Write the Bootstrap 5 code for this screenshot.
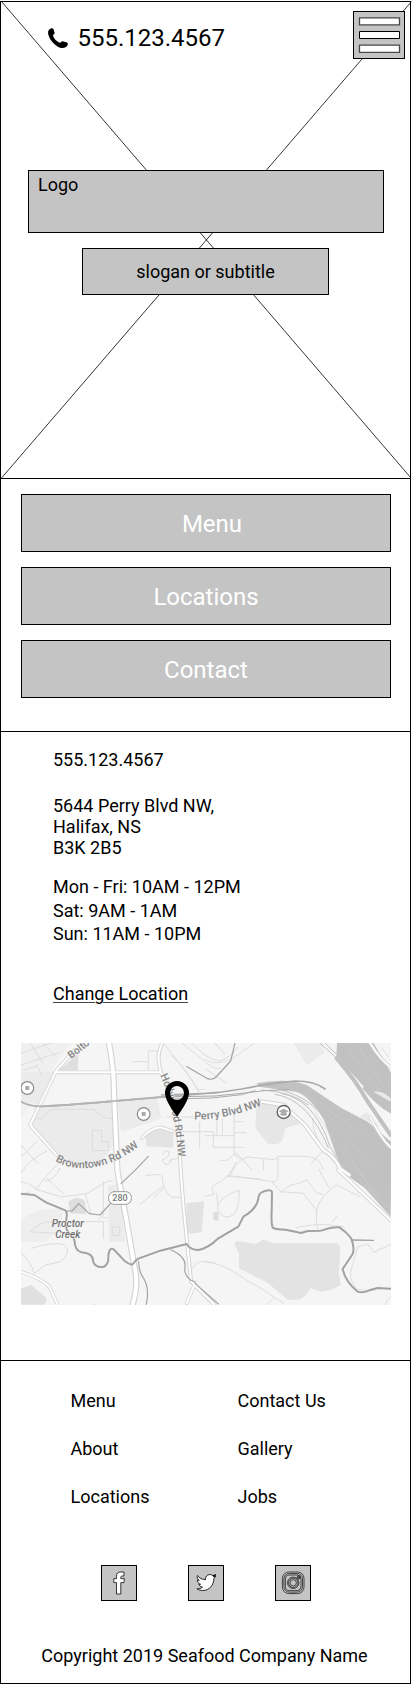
<!DOCTYPE html>
<html lang="en">
<head>
<meta charset="utf-8">
<meta name="viewport" content="width=device-width, initial-scale=1">
<title>Seafood Company Name</title>
<link href="https://cdn.jsdelivr.net/npm/bootstrap@5.3.0/dist/css/bootstrap.min.css" rel="stylesheet">
<style>
  body { font-family: Roboto, "Liberation Sans", sans-serif; font-size: 18px; line-height: 21px; color: #000; background: #fff; overflow-x: hidden; }
  a { color: #000; text-decoration: none; }
  .page-frame { width: 411px; height: 1683px; margin-top: 1px; border: 1px solid #000; }
  .hero { height: 477px; border-bottom: 1px solid #000; padding: 9px 5px 0 27px; }
  .hero-cross { left: 0; top: 0; z-index: 0; overflow: visible; pointer-events: none; }
  .hero-top { height: 159px; padding-left: 20px; z-index: 1; }
  .phone-line { font-size: 24px; line-height: 28px; margin-top: 13px; gap: 9.5px; }
  .grey-box { background: #c4c4c4; border: 1px solid #000; }
  .menu-toggle { width: 52px; height: 48px; padding: 0; border-radius: 0; }
  .logo-box { width: 356px; height: 63px; padding: 3px 9px; z-index: 1; }
  .slogan-box { width: 247px; height: 47px; margin: 15px 0 0 54px; z-index: 1; }
  .actions { height: 253px; padding: 15px 19px 0 20px; gap: 15px; border-bottom: 1px solid #000; }
  .action-link { height: 58px; padding-top: 2px; border-radius: 0; color: #fff; font-size: 24px; line-height: 28px; }
  .action-link.shifted { padding-left: 12px; }
  .location { height: 629px; padding: 17px 19px 0 20px; border-bottom: 1px solid #000; }
  .location-text { padding-left: 32px; }
  .address { margin: 25px 0 17px; }
  .hours { height: 71px; line-height: 23.7px; }
  .change-link { margin: 37px 0 39px; text-decoration: underline; text-decoration-thickness: 1px; text-underline-offset: 2px; text-decoration-color: #444; }
  .map { height: 262px; }
  .map text { font-family: Roboto, sans-serif; font-weight: 500; }
  .foot-links { padding: 29px 0 0 69.5px; row-gap: 27px; }
  .foot-links .col-a { width: 167px; }
  .social { margin-top: 58px; padding: 0 99px 0 100px; gap: 3px; }
  .social-link { width: 36px; height: 36px; }
  .copyright { margin-top: 44px; padding-right: 2px; }
</style>
</head>
<body>
<div class="page-frame">

  <header class="hero position-relative">
    <svg class="hero-cross position-absolute" width="409" height="476" viewBox="0 0 409 476" fill="none" stroke="#000" stroke-width=".8">
      <path d="M.5-.5 410 476M410.5-.5.5 476"/>
    </svg>
    <div class="hero-top position-relative d-flex align-items-start justify-content-between">
      <a href="#" class="phone-line d-flex align-items-center">
        <svg width="20" height="20" viewBox="0 0 20 20"><path d="M1.500 1.200C3 0 4.800-.2 5.400 1l1.200 3.800C6.900 6 4.800 6.800 5 7.800c.8 2.700 4 6 6.800 7 1 .2 1.600-1.800 3-1.600l4.200 1.400c1.300.6.8 2.400-.2 3.700-1.800 2.200-5.800 2.100-9.300.1C5 15.800 1.300 10.600.3 6.500-.2 4 .2 2.300 1.500 1.200z"/></svg>
        <span>555.123.4567</span>
      </a>
      <button class="menu-toggle grey-box btn d-flex" type="button" aria-label="Open menu">
        <svg width="50" height="46" viewBox="0 0 50 46" fill="#fff" stroke="#000">
          <path d="M5.500 19.500h40v7h-40z"/>
          <g stroke="#484848" stroke-width="1.300"><path d="M5.500 5.900h40v7h-40zM5.500 33.200h40v7.100h-40z"/></g>
        </svg>
      </button>
    </div>
    <div class="logo-box grey-box position-relative">Logo</div>
    <div class="slogan-box grey-box position-relative d-flex align-items-center justify-content-center">slogan or subtitle</div>
  </header>

  <nav class="actions d-flex flex-column">
    <a href="#" class="action-link shifted grey-box d-flex align-items-center justify-content-center">Menu</a>
    <a href="#" class="action-link grey-box d-flex align-items-center justify-content-center">Locations</a>
    <a href="#" class="action-link grey-box d-flex align-items-center justify-content-center">Contact</a>
  </nav>

  <main class="location">
    <div class="location-text">
      <div>555.123.4567</div>
      <div class="address">5644 Perry Blvd NW,<br>Halifax, NS<br>B3K 2B5</div>
      <div class="hours">Mon - Fri: 10AM - 12PM<br>Sat: 9AM - 1AM<br>Sun: 11AM - 10PM</div>
      <a href="#" class="change-link d-block">Change Location</a>
    </div>

    <svg class="map d-block w-100" viewBox="0 0 370 262" fill="none" stroke-linejoin="round" stroke-linecap="round">
      <rect width="370" height="262" fill="#f5f5f5"/>
      <g transform="translate(-6 -8) scale(.33333)">
        <!-- built-up areas and parks -->
        <g fill="#ebebeb">
          <path d="M18 24H165L18 250z" fill="#f0f0f0"/>
          <path d="M18 112l105-2-55 98-50-10z"/>
          <path d="M60 216l230-18 12 120-40 62-90 15-60-40-65-80z"/>
          <path d="M308 200l120-10 10 60-40 15-80 25z"/>
          <path d="M130 106l60-50-2 50z" fill="#dfdfdf"/>
          <path d="M392 295q50-20 83-5v48l-80-4z" fill="#e3e3e3"/>
          <path d="M835 24h88l5 30-52 37z"/>
          <path d="M725 205l90 0 38 62-42 12-10 40q-20 15-42 7l-38-46z" fill="#e6e6e6"/>
          <path d="M18 560q30-40 125-40l-4 60-50 40H18z" fill="#eee"/>
          <path d="M160 500q25-20 50-3l4 40-48-2z" fill="#dedede"/>
          <path d="M280 450h35l15 170h-48z"/>
          <path d="M514 505l54-6-8 92-44 7z" fill="#e2e2e2"/>
          <path d="M594 533l16-3v28l-14-3z" fill="#ddd"/>
          <path d="M18 762l30-13 46 40-4 20H18z" fill="#e0e0e0"/>
          <path d="M657 628l8-11 56 10 26-14 26 12h196l7 12-4 76 5 37-24 13-34 7-33-10q-12 27-35 34h-32l-64-52-83-42v-47z" fill="#e3e3e3"/>
        </g>
        <!-- minor streets -->
        <g stroke="#dcdcdc" stroke-width="3">
          <path d="M18 55l90-31M18 90l110-36M45 24l38 60M82 24l40 40M25 105l42-12M66 90l14 32"/>
          <path d="M62 253q10-5 20-2 15-28 35-28h120q28 30 52 28"/>
          <path d="M352 80h48v26M400 80V48h35M468 60q38 30 84 110M450 30q80 100 100 136M500 24l78 62q22 22 40 12M530 24q45 50 84 54 32-10 55-42M570 74q35 20 80-2l68-48M572 102l62 42M548 165l20-2M600 24l30 35"/>
          <path d="M455 246h80M485 290h110v47h90M554 260v78M606 300v-40M622 298v-45M657 240v115M657 260h26M657 293h36M570 302h87M615 376h20l30-22 45 50M657 355q20 30 40 10"/>
          <path d="M232 346v-60h28v34h20v25zM442 360q8-18 20-10 2 18-20 24 10 30 30 0M462 376l32-8"/>
          <path d="M895 250q-8 25 22 80M645 420q25-50 55-54 35 4 78 8l12-10 75 0q48-2 60 40M744 374l2 30M789 366v60q-5 18-20 13l-60-8-70-10M925 348l-37 38M770 440l30 32q20-25 50-26l25-12 30 40 18 4M795 470l70 5 40 50q12-45 60-75l70 35M912 404l30 55M905 525q-4 45 7 65M1100 40l20 25"/>
          <path d="M844 578q50-10 84-10l60 8M953 560l12-16"/>
          <path d="M18 330l50 55M65 320q-22 25-47 45M95 348q-50 24-77 66M18 440q28 5 45 20M65 460q22-30 65-75M135 400q-15 35-45 38M60 462l80 24 75-10 50-30q15-12 28-8M95 430l50 45M210 475l18 60M265 440v100l-15 15M18 480l25-10"/>
          <path d="M45 590q30-30 60-30h160v50M45 590l70 5q28-6 20-25M50 640q60-20 95-12 30 20-8 52l-45 10-34 25q-15-45-40-60M265 548h12M292 600v-24h22v24zM230 820l10-12 10 12"/>
          <path d="M390 423q38-10 52 2 0 45 30 62h25M375 508l65-52 5 3-28 30"/>
          <path d="M570 485l28-8q-15-20 5-30 40-18 60-65M605 475l5 55q20 30 50 5 15-30 12-70-60 25-62 43M637 424l100 8"/>
          <path d="M570 680q60 5 130 60l30 15 75 50M775 790l-20 20M532 700q15-25 38-20l30 4M1015 745q-15-15-4-50l18-60 30-8 18 25 54-26M1015 745q8 20 22 20h44M1111 810q2-15 16-25"/>
        </g>
        <!-- railway corridor -->
        <g fill="#c1c1c1">
          <path d="M966 24h110l52 90v110l-50-34-58-65-56-60z"/>
          <path d="M725 145q90-18 150 5l45 30 60 40 78 40 70 60v120q0 60-2 74L995 420q-30-50-40-85l-28-80q-45-75-85-85l-110-15z"/>
          <path d="M998 405h129v140q-60-65-129-145z"/>
        </g>
        <g stroke="#c1c1c1" stroke-width="5">
          <path d="M965 70q60 70 90 125l72 105M1050 160q40 50 80 70" stroke-width="12"/>
          <path d="M915 24l60 55M930 24l50 50M740 165q90 5 140 45M780 178q100 15 160 160M730 150q130 20 175 75M800 175q100 20 145 160l50 80" stroke-width="3"/>
        </g>
        <path d="M1075 170q30-5 52 20v10zM1035 245l60 32-40-45z" fill="#e8e8e8"/>
        <g stroke="#aaa" stroke-width="4">
          <path d="M18 200q25 14 60 14 60-2 200-14l330-28M440 180l160-6 80-12q90-18 160-24 60 0 90 24" stroke-width="5"/>
          <path d="M450 186l150-3 90-9q60-10 130-10M480 192l110-3 90-10 40-12" stroke-width="3"/>
        </g>
        <g stroke="#cfcfcf" stroke-width="1.500">
          <path d="M1000 40l95 130M1030 30l80 130M880 180l180 130M860 170l120 110 90 120M900 230l90 130 100 120M985 330l105 170M1030 430l90 90"/>
        </g>
        <!-- main roads -->
        <g stroke="#d4d4d4" stroke-width="15">
          <path d="M282 24q15 80 15 150l10 230 3 20q25 130 48 270 14 50-5 115" stroke-width="19"/>
          <path d="M120 112h315" stroke-width="11"/>
          <path d="M180 45l-55 60-80 165M45 270l80 90" stroke-width="11"/>
          <path d="M380 310q25-30 58-33l35 12" stroke-width="11"/>
          <path d="M442 24q-20 40-5 85l45 110 10 90 6 110 8 100 10 100 12 120 70 70" stroke-width="12"/>
          <path d="M540 745l-25 60M18 710q60 20 85 45l25 54" stroke-width="11"/>
          <path d="M740 200l65 10 65 60 55 75q35 20 50 55l28 20" stroke-width="13"/>
          <path d="M970 405l157 150" stroke-width="12"/>
          <path d="M1065 24q30 50 65 75M1065 245q35 70 65 95" stroke-width="10"/>
        </g>
        <g stroke="#fff">
          <path d="M282 24q15 80 15 150l10 230 3 20q25 130 48 270 14 50-5 115" stroke-width="12"/>
          <path d="M120 112h315M180 45l-55 60-80 165M45 270l80 90M380 310q25-30 58-33l35 12" stroke-width="6"/>
          <path d="M442 24q-20 40-5 85l45 110 10 90 6 110 8 100 10 100 12 120 70 70M540 745l-25 60M18 710q60 20 85 45l25 54" stroke-width="6"/>
          <path d="M740 200l65 10 65 60 55 75q35 20 50 55l28 20M970 405l157 150" stroke-width="7"/>
          <path d="M1065 24q30 50 65 75M1065 245q35 70 65 95" stroke-width="5"/>
        </g>
        <path d="M18 200q25 14 60 14 60-2 200-14l230-20" stroke="#b4b4b4" stroke-width="5"/>
        <!-- creek and other dark lines -->
        <g stroke="#a2a2a2" stroke-width="6">
          <path d="M18 476l40 4 35 22 58 24q7 7 3 26-6 28 10 45 15 8 16 32 5 25 30 24 24 4 24 25 5 20 30 18 18-5 16-35 4-28 18-16l30 32q12 10 24 12l10-12 8-6 60-22 85-22q10 18 35 18 30-5 60-35l60-35q10-20 15-30 40-22 45-55 2-15 10-18 28-12 31 0l-1 60q-2 32 3 46 8 6 40 6l45 10 20-6 40-1q35-12 55-10 20 12 35 32 12 28 5 48l-30 45q8 38 45 68 15 5 35-4l25-7 38 2"/>
          <path d="M1010 615l66 1" stroke-width="4"/>
          <path d="M371 680q0 30 15 50 18 30 8 78M468 644q45 20 42 50-5 25 18 42l12 5M540 745l70 62" stroke-width="3.500"/>
          <path d="M154 528l17 0 20-22 32 30 32 4 32-35M318 446l42-40 40-42M516 95l62 36q15 5 25-5l44-48 13-54" stroke-width="3.500"/>
        </g>
        <!-- station markers -->
        <g fill="#fff" stroke="#8b8b8b" stroke-width="3.500">
          <circle cx="37" cy="159" r="19"/><circle cx="386" cy="237" r="19"/><circle cx="806" cy="231" r="19.500" stroke="#606060" stroke-width="4"/>
        </g>
        <path d="M31 153h12v12H31zM380 231h12v12h-12z" fill="#aaa"/>
        <path d="M791 229l15-8 15 8-15 8zM796 235h20v5q-10 5-20 0z" fill="#ababab"/>
        <rect x="281" y="470" width="68" height="38" rx="17" fill="#fff" stroke="#999" stroke-width="3"/>
        <!-- labels -->
        <defs>
          <path id="boltonRoad" d="M168 72l80-62"/>
          <path id="browntownRoad" d="M121 378Q175 412 255 393T400 306"/>
          <path id="hollywoodRoad" d="M436 121Q482 220 492 400"/>
          <path id="perryRoad" d="M538 253Q625 258 762 203"/>
        </defs>
        <g fill="#858585" stroke="#f5f5f5" stroke-width="3" paint-order="stroke" font-size="32.500">
          <text font-size="31"><textPath href="#boltonRoad">Bolto</textPath></text>
          <text><textPath href="#browntownRoad">Browntown Rd NW</textPath></text>
          <text font-size="31.500"><textPath href="#hollywoodRoad">Hollywood Rd NW</textPath></text>
          <text><textPath href="#perryRoad">Perry Blvd NW</textPath></text>
          <g fill="#707070" font-size="30" font-style="italic" text-anchor="middle">
            <text x="158" y="576">Proctor</text><text x="158" y="609">Creek</text>
          </g>
          <text x="315" y="499" font-size="27" text-anchor="middle" fill="#777" stroke="none">280</text>
        </g>
        <!-- location pin -->
        <path d="M486 245q-36-49-36-71a36 36 0 0 1 72 0q0 22-36 71zm0-50a21 21 0 1 0 0-42 21 21 0 0 0 0 42z" fill="#000" fill-rule="evenodd"/>
      </g>
    </svg>
  </main>

  <footer>
    <div class="foot-links d-grid">
      <div class="d-flex"><a href="#" class="col-a">Menu</a><a href="#">Contact Us</a></div>
      <div class="d-flex"><a href="#" class="col-a">About</a><a href="#">Gallery</a></div>
      <div class="d-flex"><a href="#" class="col-a">Locations</a><a href="#">Jobs</a></div>
    </div>
    <div class="social d-flex">
      <a href="#" class="social-link grey-box d-flex me-5" aria-label="Facebook">
        <svg width="34" height="34" viewBox="0 0 34 34" fill="#fff" stroke="#222" stroke-width=".9"><path d="M14.500 28V16.600h-2.700v-4h2.700v-2.400c0-3 1.700-4.200 4-4.200H22v4h-1.900c-1 0-1.300.5-1.300 1.300v1.300h3.600l-.5 4h-3.100V28z"/></svg>
      </a>
      <a href="#" class="social-link grey-box d-flex" aria-label="Twitter">
        <svg width="34" height="34" viewBox="0 0 34 34" fill="#fff" stroke="#111" stroke-width=".9"><path d="M8.300 9.500c2.300 2.700 4.900 4 8.200 4.200-.3-3 1.700-5.200 4.300-5.200 1.400 0 2.300.5 3 1.200.9-.2 1.700-.6 2.600-1-.3.9-.8 1.600-1.600 2l2-.3c-.5.8-1.100 1.400-1.900 1.900.1 6.500-4.500 12.200-11 12.200-2.300 0-4.300-.6-6-1.700 2.300.1 4-.4 5.700-1.700-1.900-.2-3.200-1.200-3.700-2.800h1.700c-2-.6-3.300-2.200-3.200-4.300.6.3 1.200.5 1.900.5-1.900-1.300-2.600-3.400-2-5z"/><path d="M23.800 9.700l2.800-.9-1.200 2.200z" fill="#111"/></svg>
      </a>
      <a href="#" class="social-link grey-box d-flex ms-auto" aria-label="Instagram">
        <svg width="34" height="34" viewBox="0 0 34 34" fill="none" stroke="#222" stroke-width=".8"><rect x="6.400" y="6" width="21.600" height="21.600" rx="6.500"/><rect x="7.900" y="7.500" width="18.600" height="18.600" rx="5.500"/><rect x="9.400" y="9" width="15.600" height="15.600" rx="4"/><circle cx="17.200" cy="16.800" r="5.700"/><circle cx="17.200" cy="16.800" r="4.700"/><circle cx="17.200" cy="16.800" r="3.200"/><circle cx="22.600" cy="11.400" r="1.500" fill="#555"/></svg>
      </a>
    </div>
    <div class="copyright text-center">Copyright 2019 Seafood Company Name</div>
  </footer>
</div>
</body>
</html>
